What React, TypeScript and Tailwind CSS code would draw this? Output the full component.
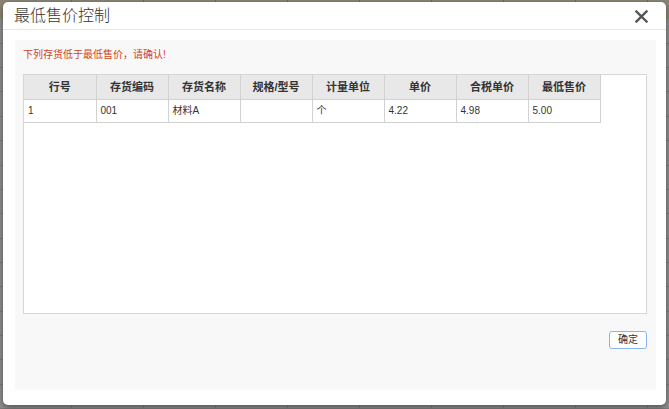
import React from 'react'

const columns = ['行号', '存货编码', '存货名称', '规格/型号', '计量单位', '单价', '合税单价', '最低售价']
const rows = [['1', '001', '材料A', '', '个', '4.22', '4.98', '5.00']]

function Backdrop() {
  // grid page behind the modal, dimmed by overlay
  return (
    <div className="absolute inset-0 flex flex-col bg-[#8f8f8f]">
      <div className="flex h-[20px] bg-[#8b8775]">
        {Array.from({ length: 10 }).map((_, i) => (
          <div key={i} className="w-[72px] shrink-0 border-r border-[#6f6c60]" />
        ))}
      </div>
      {Array.from({ length: 16 }).map((_, r) => (
        <div key={r} className="flex h-[25px] border-b border-[#7d7d7d]">
          {Array.from({ length: 10 }).map((_, i) => (
            <div key={i} className="w-[72px] shrink-0 border-r border-[#7d7d7d]" />
          ))}
        </div>
      ))}
    </div>
  )
}

export default function App() {
  return (
    <div className="relative w-[669px] h-[409px] overflow-hidden" style={{ fontFamily: '"Liberation Sans", "Noto Sans CJK SC", sans-serif' }}>
      <Backdrop />

      <div className="absolute left-[3px] top-[2px] w-[663px] h-[403px] bg-white rounded-[5px] shadow-[0_2px_6px_rgba(0,0,0,0.45)] flex flex-col">
        {/* header */}
        <div className="h-[28px] shrink-0 flex items-center justify-between pl-[11px] pr-[18px] border-b border-[#e6e6e6]">
          <span className="text-[16px] text-[#333] leading-none font-light">最低售价控制</span>
          <svg width="13" height="13" viewBox="0 0 13 13" className="mt-[1px]">
            <path d="M1.5 1.5 L11.5 11.5 M11.5 1.5 L1.5 11.5" stroke="#555" strokeWidth="2.4" strokeLinecap="square" />
          </svg>
        </div>

        {/* body */}
        <div className="flex-1 pt-[10px] pl-[12px] pr-[10px] pb-[15px] flex">
          <div className="flex-1 bg-[#f8f8f8] px-[8px] pt-[8px] flex flex-col">
            <div className="text-[10px] text-[#d4431c] leading-[14px]">下列存货低于最低售价，请确认!</div>

            <div className="mt-[12px] h-[240px] w-[624px] bg-white border border-[#d6d6d6]">
              <table className="border-collapse text-[10px] text-[#333] table-fixed">
                <thead>
                  <tr className="h-[24px] bg-[#e8e8e8]">
                    {columns.map((c) => (
                      <th key={c} className="w-[72px] border-r border-b border-[#d2d2d2] font-bold text-center text-[11px]">
                        {c}
                      </th>
                    ))}
                  </tr>
                </thead>
                <tbody>
                  {rows.map((r, i) => (
                    <tr key={i} className="h-[23px]">
                      {r.map((v, j) => (
                        <td key={j} className="w-[72px] border-r border-b border-[#d2d2d2] px-[4px] text-left">
                          {v}
                        </td>
                      ))}
                    </tr>
                  ))}
                </tbody>
              </table>
            </div>

            <div className="flex justify-end mt-[17px] pr-[1px]">
              <button className="w-[38px] h-[18px] bg-white border-[1.5px] border-[#8ab4f0] rounded-[3px] text-[10px] text-[#333] leading-none">
                确定
              </button>
            </div>
          </div>
        </div>
      </div>
    </div>
  )
}
